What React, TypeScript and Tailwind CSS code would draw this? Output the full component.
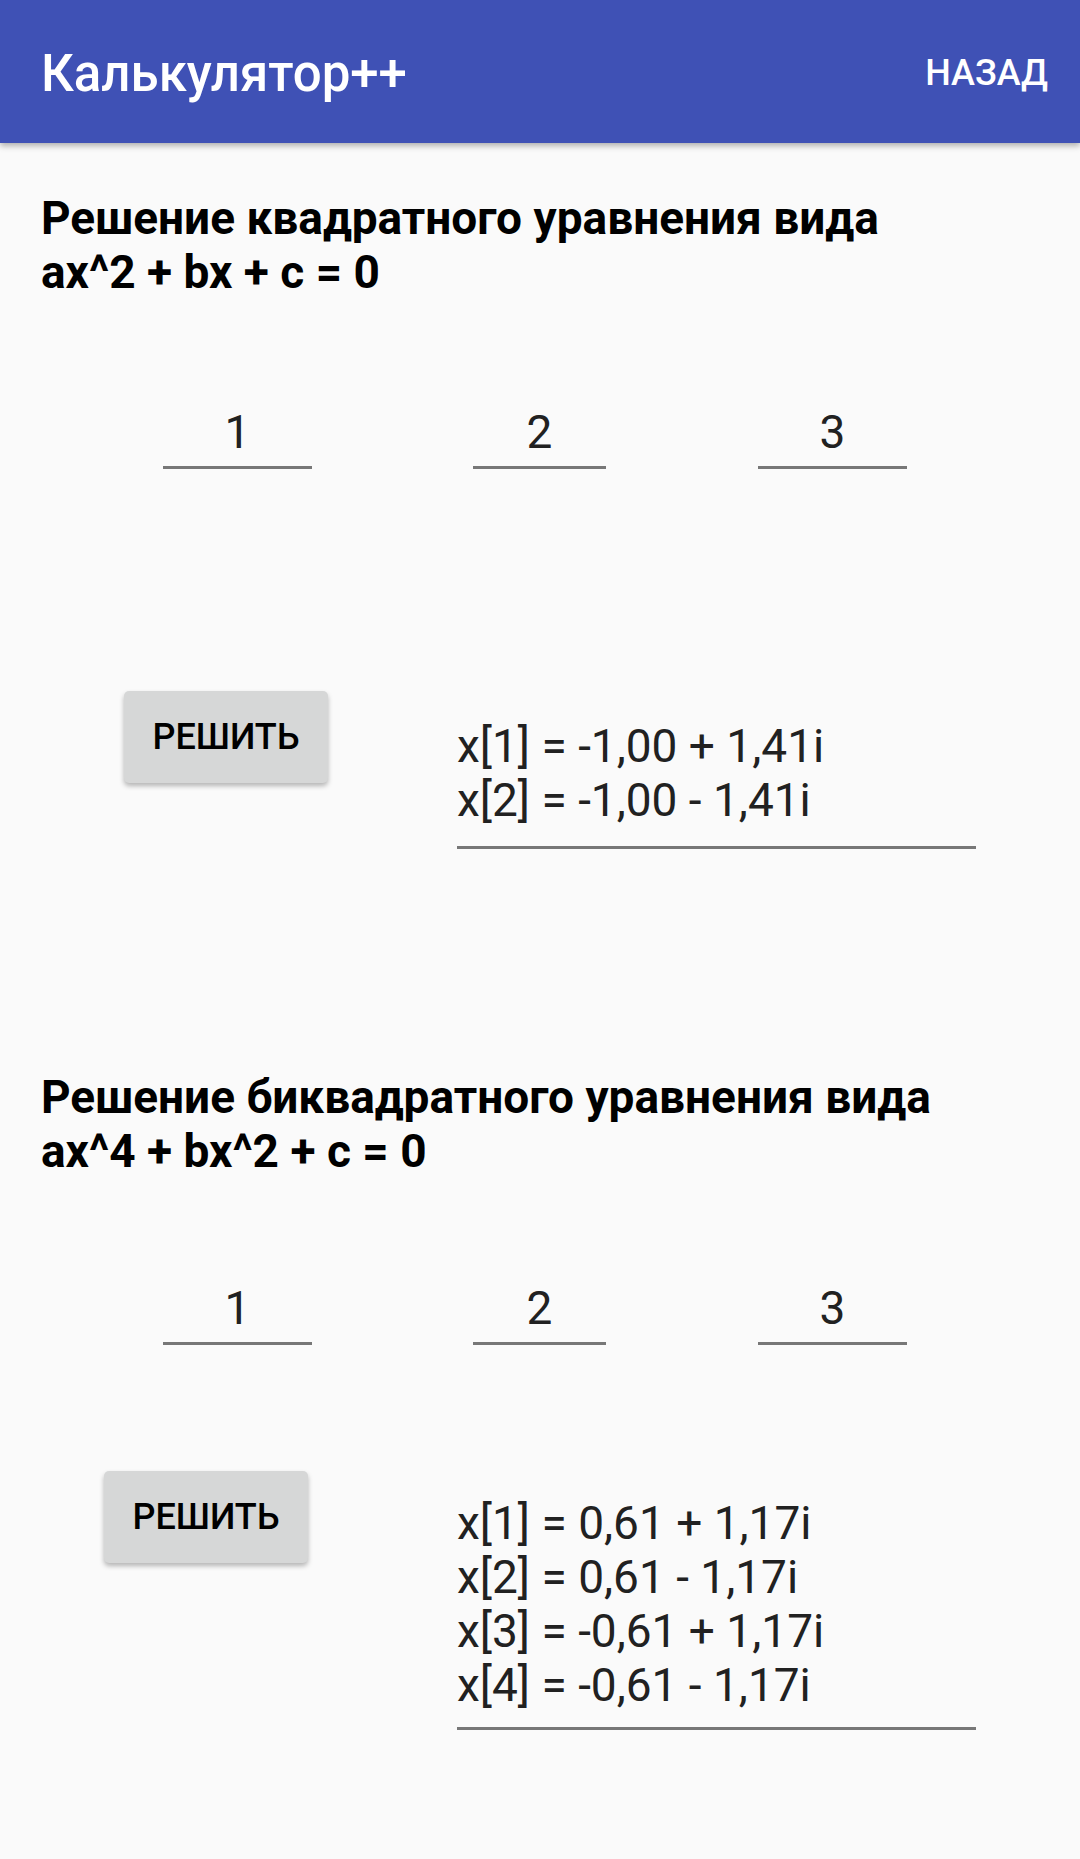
import React from 'react';

const FONT = "font-['Roboto','Liberation_Sans',sans-serif]";

function Field({ value, width, ml }: { value: string; width: string; ml: string }) {
  return (
    <div className={`${ml} ${width} border-b-[3px] border-[#777777] pb-[7px] text-center text-[46px] leading-[54px] text-[#212121]`}>
      {value}
    </div>
  );
}

function Inputs({ mt }: { mt: string }) {
  return (
    <div className={`${mt} flex`}>
      <Field value="1" ml="ml-[163px]" width="w-[149px]" />
      <Field value="2" ml="ml-[161px]" width="w-[133px]" />
      <Field value="3" ml="ml-[152px]" width="w-[149px]" />
    </div>
  );
}

function SolveButton({ ml }: { ml: string }) {
  return (
    <button
      className={`${ml} flex h-[92px] w-[204px] shrink-0 items-center justify-center rounded-[5px] bg-[#d6d7d7] text-[36px] font-medium text-black shadow-[0_3px_5px_rgba(0,0,0,0.28)]`}
    >
      РЕШИТЬ
    </button>
  );
}

function Result({ lines, mt, pb }: { lines: string[]; mt: string; pb: string }) {
  return (
    <div className={`${mt} ${pb} ml-auto mr-[104px] w-[519px] border-b-[3px] border-[#777777] text-[46px] leading-[54px] text-[#212121]`}>
      {lines.map(l => (
        <div key={l} className="whitespace-nowrap">{l}</div>
      ))}
    </div>
  );
}

export default function App() {
  return (
    <div className={`${FONT} h-[1859px] w-[1080px] overflow-hidden bg-[#fafafa]`}>
      {/* Toolbar */}
      <div className="relative z-10 flex h-[143px] items-center justify-between bg-[#3f51b5] pl-[41px] pr-[32px] pt-[3px] text-white shadow-[0_3px_6px_rgba(0,0,0,0.3)]">
        <div className="text-[51px] font-medium leading-none">Калькулятор++</div>
        <div className="text-[36px] font-medium leading-none">НАЗАД</div>
      </div>

      {/* Quadratic */}
      <div className="mt-[48px] whitespace-nowrap pl-[41px] text-[46px] font-bold leading-[54px] text-black">
        Решение квадратного уравнения вида
        <br />
        ax^2 + bx + c = 0
      </div>
      <Inputs mt="mt-[106px]" />
      <div className="mt-[222px] flex items-start">
        <SolveButton ml="ml-[124px]" />
        <Result
          mt="mt-[28px]"
          pb="pb-[19px]"
          lines={['x[1] = -1,00 + 1,41i', 'x[2] = -1,00 - 1,41i']}
        />
      </div>

      {/* Biquadratic */}
      <div className="mt-[221px] whitespace-nowrap pl-[41px] text-[46px] font-bold leading-[54px] text-black">
        Решение биквадратного уравнения вида
        <br />
        ax^4 + bx^2 + c = 0
      </div>
      <Inputs mt="mt-[103px]" />
      <div className="mt-[126px] flex items-start">
        <SolveButton ml="ml-[104px]" />
        <Result
          mt="mt-[25px]"
          pb="pb-[15px]"
          lines={[
            'x[1] = 0,61 + 1,17i',
            'x[2] = 0,61 - 1,17i',
            'x[3] = -0,61 + 1,17i',
            'x[4] = -0,61 - 1,17i',
          ]}
        />
      </div>
    </div>
  );
}
